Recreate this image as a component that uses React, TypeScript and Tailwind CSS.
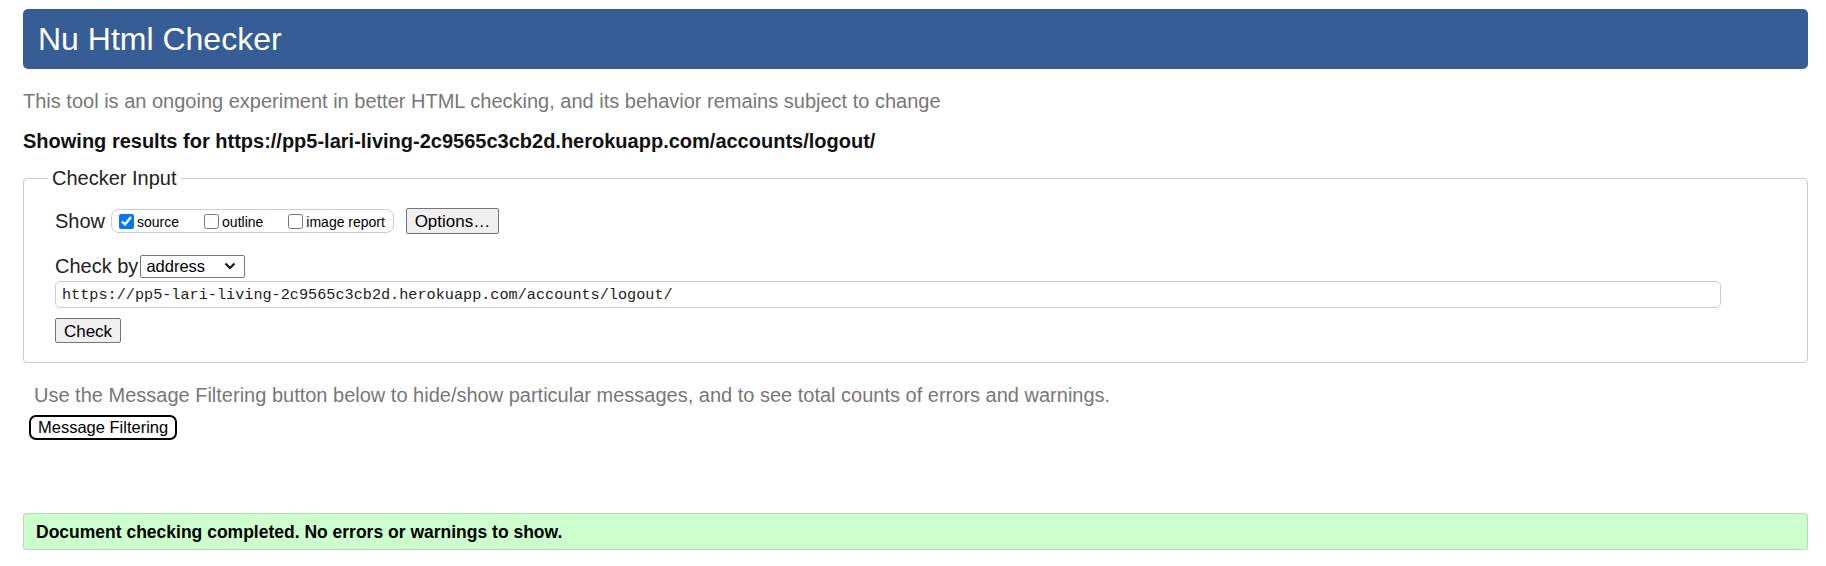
import { useState } from "react";

const sans = "font-['Liberation_Sans',Arial,sans-serif]";

function OptionBox() {
  const [opts, setOpts] = useState({ source: true, outline: false, image: false });
  const items: { key: keyof typeof opts; label: string }[] = [
    { key: "source", label: "source" },
    { key: "outline", label: "outline" },
    { key: "image", label: "image report" },
  ];
  return (
    <div className="flex h-[24px] items-center gap-[25px] rounded-[8px] border border-[#cccccc] pl-[7px] pr-[8px]">
      {items.map((it) => (
        <label key={it.key} className="flex items-center gap-[3px] text-[14px] text-black">
          <input
            type="checkbox"
            checked={opts[it.key]}
            onChange={() => setOpts({ ...opts, [it.key]: !opts[it.key] })}
            className="m-0 h-[15px] w-[15px] accent-[#0075ff]"
          />
          <span className="relative top-[1px]">{it.label}</span>
        </label>
      ))}
    </div>
  );
}

export default function App() {
  const url = "https://pp5-lari-living-2c9565c3cb2d.herokuapp.com/accounts/logout/";
  return (
    <div className={`${sans} min-h-screen bg-white pl-[23px] pr-[18px] pt-[9px] text-black`}>
      <div className="flex h-[60px] items-center rounded-[5px] bg-[#365d96] px-[15px]">
        <h1 className="text-[32px] leading-none text-white">Nu Html Checker</h1>
      </div>

      <p className="mt-[20px] text-[20px] leading-[24px] text-[#777777]">
        This tool is an ongoing experiment in better HTML checking, and its behavior remains subject to change
      </p>
      <p className="mt-[16px] text-[20px] font-bold leading-[24px] text-[#111111]">
        Showing results for {url}
      </p>

      <fieldset className="mt-[13px] rounded-[4px] border border-[#cccccc] pb-[18px] pl-[24px] pr-[24px]">
        <legend className="px-[4px] text-[20px] leading-[24px] text-[#222222]">Checker Input</legend>
        <div className="pl-[7px] pt-[18px]">
          <div className="flex items-center">
            <span className="mr-[6px] text-[20px] leading-[24px] text-[#222222]">Show</span>
            <OptionBox />
            <button className="ml-[12px] h-[26px] w-[93px] rounded-[2px] border border-[#767676] bg-[#efefef] text-[17px] text-black">
              Options…
            </button>
          </div>

          <div className="mt-[20px] flex items-center">
            <span className="mr-[2px] text-[20px] leading-[24px] text-[#222222]">Check by</span>
            <div className="flex h-[23px] w-[105px] items-center justify-between rounded-[2px] border border-[#767676] bg-white pl-[5px] pr-[8px] text-[16.5px] text-black">
              <span>address</span>
              <svg width="12" height="8" viewBox="0 0 12 8" fill="none">
                <path d="M1.5 1.5 L6 6 L10.5 1.5" stroke="#111" strokeWidth="2" />
              </svg>
            </div>
          </div>

          <input
            type="text"
            defaultValue={url}
            className="mt-[3px] block h-[27px] w-[1666px] rounded-[5px] border border-[#cccccc] px-[6px] font-['Liberation_Mono','Courier_New',monospace] text-[15.2px] text-[#222222]"
          />

          <button className="mt-[10px] h-[25px] w-[66px] rounded-[2px] border border-[#767676] bg-[#efefef] text-[17px] text-black">
            Check
          </button>
        </div>
      </fieldset>

      <p className="mt-[20px] pl-[11px] text-[20px] leading-[24px] text-[#777777]">
        Use the Message Filtering button below to hide/show particular messages, and to see total counts of errors and warnings.
      </p>
      <button className="ml-[6px] mt-[8px] h-[25px] rounded-[7px] border-2 border-black bg-white px-[7px] text-[16.5px] leading-none text-black">
        Message Filtering
      </button>

      <div className="mt-[73px] flex h-[37px] items-center rounded-[3px] border border-[#b9d9b9] bg-[#ccffcc] pl-[12px] text-[17.5px] font-bold text-black">
        Document checking completed. No errors or warnings to show.
      </div>
    </div>
  );
}
